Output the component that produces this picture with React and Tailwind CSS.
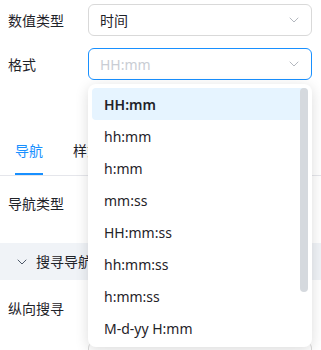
import { ChevronDown } from 'lucide-react';

const options = ['HH:mm', 'hh:mm', 'h:mm', 'mm:ss', 'HH:mm:ss', 'hh:mm:ss', 'h:mm:ss', 'M-d-yy H:mm'];

function Select({ value, placeholder, focused }) {
  return (
    <div
      className={`flex h-8 w-[224px] items-center justify-between rounded-md border bg-white pl-[11px] pr-[9px] ${
        focused ? 'border-[#1890ff]' : 'border-[#d9d9d9]'
      }`}
    >
      <span className={value ? 'text-[#1f2329]' : 'text-[#c9cdd4]'}>{value || placeholder}</span>
      <ChevronDown className="h-4 w-4 text-[#b4b8bf]" strokeWidth={1.5} />
    </div>
  );
}

export default function App() {
  return (
    <div className="relative h-[350px] w-[321px] overflow-hidden bg-white text-[14px] text-[#1f2329] [font-family:'Noto_Sans','Noto_Sans_CJK_SC',sans-serif]">
      <div className="flex flex-col">
        <div className="flex items-center pl-2 pt-1">
          <span className="w-20">数值类型</span>
          <Select value="时间" />
        </div>
        <div className="mt-3 flex items-center pl-2">
          <span className="w-20">格式</span>
          <Select placeholder="HH:mm" focused />
        </div>

        <div className="mt-[60px] flex border-b border-[#e5e6eb] pl-[15px]">
          <div className="relative pb-[14px] text-[#1890ff]">
            导航
            <div className="absolute bottom-0 left-0 h-[2px] w-full bg-[#1890ff]" />
          </div>
          <div className="ml-[30px] pb-[14px]">样式</div>
        </div>

        <div className="flex h-[67px] items-center pb-[12px] pl-2">导航类型</div>

        <div className="flex h-[37px] items-center bg-[#f0f3f7] pl-[14px]">
          <ChevronDown className="h-4 w-4 text-[#4e5969]" strokeWidth={1.5} />
          <span className="ml-[6px]">搜寻导航</span>
        </div>

        <div className="flex h-[62px] items-center pb-[6px] pl-2">纵向搜寻</div>

        <div className="flex items-center pl-2">
          <span className="w-20">横向搜寻</span>
          <Select value="居右对齐" />
        </div>
      </div>

      <div className="absolute left-[88px] top-[84px] h-[263px] w-[224px] rounded-lg bg-white p-1 shadow-[0_3px_14px_rgba(0,0,0,0.14)]">
        <div className="flex flex-col">
          {options.map((o, i) => (
            <div
              key={o}
              className={`flex h-8 items-center rounded px-3 ${i === 0 ? 'bg-[#e6f4ff] font-semibold' : ''}`}
            >
              {o}
            </div>
          ))}
        </div>
        <div className="absolute right-1 top-1 h-[204px] w-2 rounded-full bg-[#d5d9de]" />
      </div>
    </div>
  );
}
